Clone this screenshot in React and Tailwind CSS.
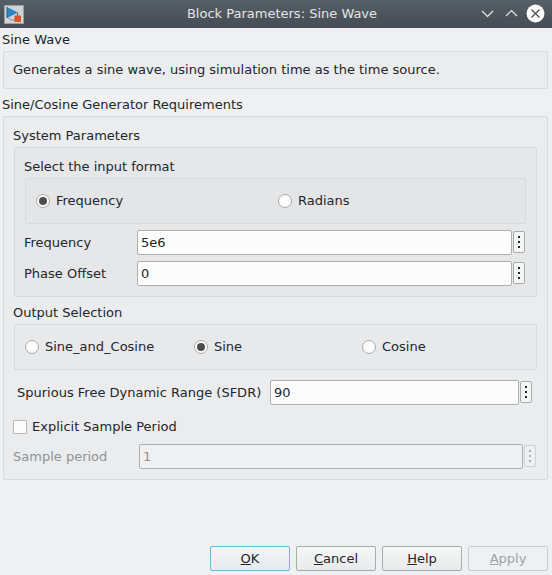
const font = { fontFamily: '"DejaVu Sans", sans-serif' };

function Radio({ checked }) {
  return (
    <span className="flex h-[14px] w-[14px] shrink-0 items-center justify-center rounded-full border border-[#a9aaab] bg-[#fcfcfc]">
      {checked && <span className="h-2 w-2 rounded-full bg-[#4d4d4d]" />}
    </span>
  );
}

function RadioItem({ label, checked, className }) {
  return (
    <div className={`flex items-center gap-[6px] ${className}`}>
      <Radio checked={checked} />
      <span>{label}</span>
    </div>
  );
}

function Dots({ disabled, className }) {
  const dot = disabled ? "bg-[#a9abac]" : "bg-[#232629]";
  return (
    <div className={`flex h-[22px] w-[12px] shrink-0 flex-col items-center justify-center gap-[3px] self-start rounded-[2px] border ${disabled ? "border-[#cfd1d3] bg-[#eff0f1]" : "border-[#a9aaab] bg-[#f5f6f6]"} ${className}`}>
      <span className={`h-[2px] w-[2px] ${dot}`} />
      <span className={`h-[2px] w-[2px] ${dot}`} />
      <span className={`h-[2px] w-[2px] ${dot}`} />
    </div>
  );
}

function Field({ value, disabled, className }) {
  return (
    <div className={`flex h-[25px] items-center rounded-[2px] border px-[3px] ${disabled ? "border-[#acaeaf] bg-[#eff0f1] text-[#8f9395]" : "border-[#acaeaf] bg-[#fcfcfc]"} ${className}`}>
      {value}
    </div>
  );
}

function Btn({ children, variant }) {
  const cls =
    variant === "ok"
      ? "border-[#6ab7e6] bg-gradient-to-b from-[#f4f6f7] to-[#e6ebee]"
      : variant === "off"
        ? "border-[#c9cbcd] text-[#a0a3a5] bg-[#eff0f1]"
        : "border-[#a9aaab] bg-gradient-to-b from-[#f5f6f6] to-[#e9eaeb]";
  return (
    <div className={`flex h-[25px] w-[80px] items-center justify-center rounded-[2px] border ${cls}`}>
      {children}
    </div>
  );
}

function Row({ children, className }) {
  return <div className={`flex items-center ${className}`}>{children}</div>;
}

export default function App() {
  return (
    <div style={font} className="flex h-[575px] w-[552px] flex-col overflow-hidden bg-[#eff0f1] text-[13px] leading-[16px] text-[#232629]">
      {/* title bar */}
      <div className="flex h-[28px] shrink-0 items-center bg-gradient-to-b from-[#565f67] to-[#454c53] pl-[4px] pr-[7px]">
        <svg width="20" height="19" viewBox="0 0 20 19" className="shrink-0">
          <rect x="0" y="0" width="20" height="19" fill="#d2d3d4" />
          <rect x="0.5" y="0.5" width="19" height="18" fill="none" stroke="#9b9da0" />
          <path d="M3 12 L7 15 H12" fill="none" stroke="#8d8f92" strokeWidth="1" />
          <path d="M3 2 L14 7.5 L3 13 Z" fill="#2b86c5" />
          <path d="M3 2 L3 13" stroke="#1d5f8f" strokeWidth="1" />
          <path d="M13.5 8 V11" stroke="#555" strokeWidth="1" />
          <rect x="10.5" y="10.5" width="6.5" height="6.5" fill="#d8542a" />
        </svg>
        <div className="mb-[1px] flex-1 pl-[62px] text-center text-[#e3e5e7]">Block Parameters: Sine Wave</div>
        <div className="mb-[1px] flex items-center gap-[5px]">
          <svg width="19" height="19" viewBox="0 0 19 19" fill="none" stroke="#eceef0" strokeWidth="1.1"><path d="M4 7 L9.5 12.5 L15 7" /></svg>
          <svg width="19" height="19" viewBox="0 0 19 19" fill="none" stroke="#eceef0" strokeWidth="1.1"><path d="M4 12 L9.5 6.5 L15 12" /></svg>
          <svg width="19" height="19" viewBox="0 0 19 19"><circle cx="9.5" cy="9.5" r="9" fill="#fcfcfc" /><path d="M5.5 5.5 L13.5 13.5 M13.5 5.5 L5.5 13.5" stroke="#454c53" strokeWidth="1.2" /></svg>
        </div>
      </div>

      <div className="mt-[4px] h-[16px] pl-[2px]">Sine Wave</div>

      <div className="mx-[3px] mt-[3px] flex h-[38px] w-[545px] items-center rounded-[2px] border border-[#d7d9da] bg-[#ebecee] pl-[9px]">
        Generates a sine wave, using simulation time as the time source.
      </div>

      <div className="mt-[8px] h-[16px] pl-[2px]">Sine/Cosine Generator Requirements</div>

      <div className="mx-[3px] mt-[3px] flex h-[364px] w-[545px] flex-col rounded-[2px] border border-[#d7d9da] bg-[#ebecee] pl-[9px]">
        <div className="mt-[11px] h-[16px]">System Parameters</div>

        <div className="ml-[1px] mt-[3px] flex h-[150px] w-[523px] flex-col rounded-[2px] border border-[#d7d9da] bg-[#e6e7e9] pl-[9px]">
          <div className="mt-[11px] h-[16px]">Select the input format</div>
          <Row className="ml-[1px] mt-[3px] h-[46px] w-[501px] rounded-[2px] border border-[#d7d9da] bg-[#e4e5e7] pl-[10px]">
            <RadioItem label="Frequency" checked className="w-[242px]" />
            <RadioItem label="Radians" />
          </Row>
          <Row className="mt-[6px]">
            <span className="w-[113px]">Frequency</span>
            <Field value="5e6" className="w-[375px]" />
            <Dots className="ml-[1px] mt-[1px]" />
          </Row>
          <Row className="mt-[6px]">
            <span className="w-[113px]">Phase Offset</span>
            <Field value="0" className="w-[375px]" />
            <Dots className="ml-[1px] mt-[1px]" />
          </Row>
        </div>

        <div className="mt-[8px] h-[16px]">Output Selection</div>

        <Row className="ml-[1px] mt-[3px] h-[46px] w-[523px] rounded-[2px] border border-[#d7d9da] bg-[#e8e9eb] pl-[10px]">
          <RadioItem label="Sine_and_Cosine" className="w-[169px]" />
          <RadioItem label="Sine" checked className="w-[168px]" />
          <RadioItem label="Cosine" />
        </Row>

        <Row className="mt-[10px]">
          <span className="w-[257px] pl-[4px]">Spurious Free Dynamic Range (SFDR)</span>
          <Field value="90" className="w-[249px]" />
          <Dots className="ml-[1px] mt-[1px]" />
        </Row>

        <Row className="mt-[14px] h-[16px] gap-[5px]">
          <span className="h-[14px] w-[14px] rounded-[1px] border border-[#b8babb] bg-[#fcfcfc]" />
          <span>Explicit Sample Period</span>
        </Row>

        <Row className="mt-[9px]">
          <span className="w-[126px] text-[#8f9395]">Sample period</span>
          <Field value="1" disabled className="w-[384px]" />
          <Dots disabled className="ml-[1px] mt-[1px]" />
        </Row>
      </div>

      <div className="mt-auto mb-[4px] flex justify-end gap-[6px] pr-[4px]">
        <Btn variant="ok"><span><u>O</u>K</span></Btn>
        <Btn><span><u>C</u>ancel</span></Btn>
        <Btn><span><u>H</u>elp</span></Btn>
        <Btn variant="off"><span><u>A</u>pply</span></Btn>
      </div>
    </div>
  );
}
